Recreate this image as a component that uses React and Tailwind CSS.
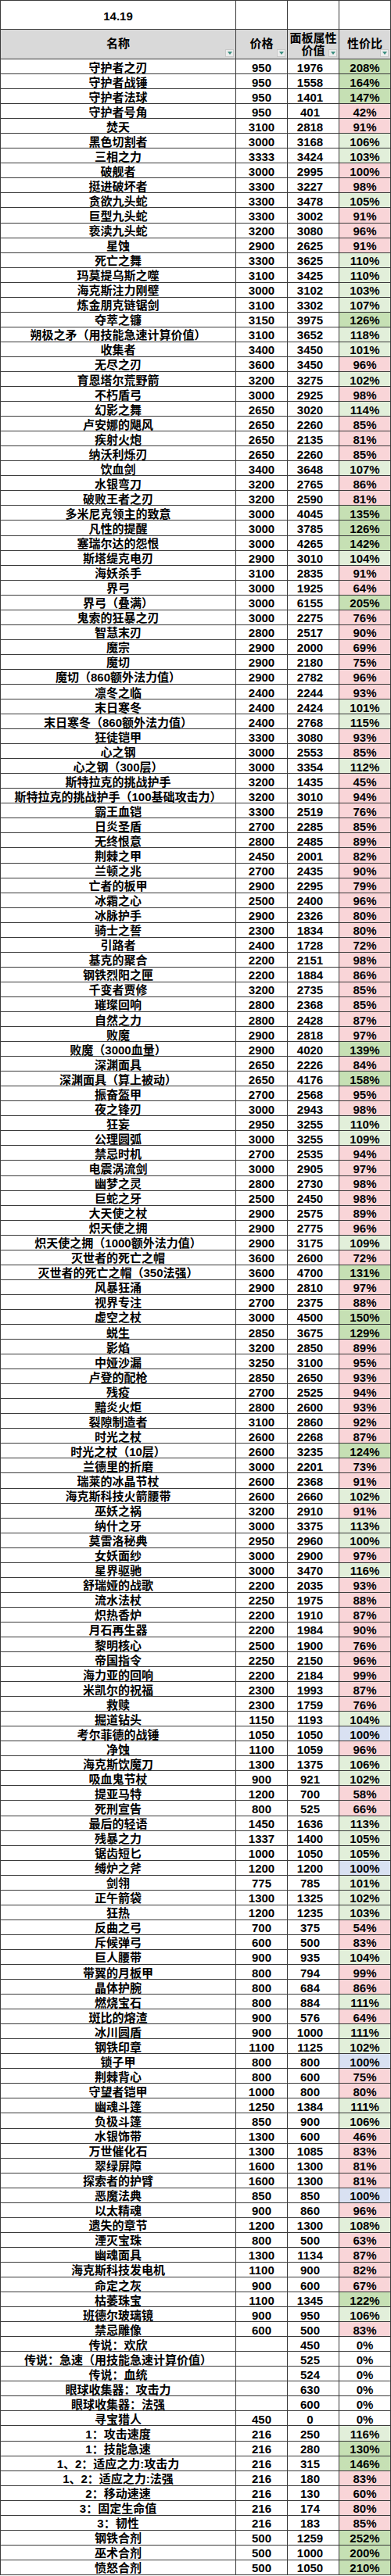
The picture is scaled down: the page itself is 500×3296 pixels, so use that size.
import React from "react";

// 名称|价格|面板属性价值|性价比
const RAW = `守护者之刃|950|1976|208%
守护者战锤|950|1558|164%
守护者法球|950|1401|147%
守护者号角|950|401|42%
焚天|3100|2818|91%
黑色切割者|3000|3168|106%
三相之力|3333|3424|103%
破舰者|3000|2995|100%
挺进破坏者|3300|3227|98%
贪欲九头蛇|3300|3478|105%
巨型九头蛇|3300|3002|91%
亵渎九头蛇|3200|3080|96%
星蚀|2900|2625|91%
死亡之舞|3300|3625|110%
玛莫提乌斯之噬|3100|3425|110%
海克斯注力刚壁|3000|3102|103%
炼金朋克链锯剑|3100|3302|107%
夺萃之镰|3150|3975|126%
朔极之矛（用技能急速计算价值）|3100|3652|118%
收集者|3400|3450|101%
无尽之刃|3600|3450|96%
育恩塔尔荒野箭|3200|3275|102%
不朽盾弓|3000|2925|98%
幻影之舞|2650|3020|114%
卢安娜的飓风|2650|2260|85%
疾射火炮|2650|2135|81%
纳沃利烁刃|2650|2260|85%
饮血剑|3400|3648|107%
水银弯刀|3200|2765|86%
破败王者之刃|3200|2590|81%
多米尼克领主的致意|3000|4045|135%
凡性的提醒|3000|3785|126%
塞瑞尔达的怨恨|3000|4265|142%
斯塔缇克电刃|2900|3010|104%
海妖杀手|3100|2835|91%
界弓|3000|1925|64%
界弓（叠满）|3000|6155|205%
鬼索的狂暴之刃|3000|2275|76%
智慧末刃|2800|2517|90%
魔宗|2900|2000|69%
魔切|2900|2180|75%
魔切（860额外法力值）|2900|2782|96%
凛冬之临|2400|2244|93%
末日寒冬|2400|2424|101%
末日寒冬（860额外法力值）|2400|2768|115%
狂徒铠甲|3300|3080|93%
心之钢|3000|2553|85%
心之钢（300层）|3000|3354|112%
斯特拉克的挑战护手|3200|1435|45%
斯特拉克的挑战护手（100基础攻击力）|3200|3010|94%
霸王血铠|3300|2519|76%
日炎圣盾|2700|2285|85%
无终恨意|2800|2485|89%
荆棘之甲|2450|2001|82%
兰顿之兆|2700|2435|90%
亡者的板甲|2900|2295|79%
冰霜之心|2500|2400|96%
冰脉护手|2900|2326|80%
骑士之誓|2300|1834|80%
引路者|2400|1728|72%
基克的聚合|2200|2151|98%
钢铁烈阳之匣|2200|1884|86%
千变者贾修|3200|2735|85%
璀璨回响|2800|2368|85%
自然之力|2800|2428|87%
败魔|2900|2818|97%
败魔（3000血量）|2900|4020|139%
深渊面具|2650|2226|84%
深渊面具（算上被动）|2650|4176|158%
振奋盔甲|2700|2568|95%
夜之锋刃|3000|2943|98%
狂妄|2950|3255|110%
公理圆弧|3000|3255|109%
禁忌时机|2700|2535|94%
电震涡流剑|3000|2905|97%
幽梦之灵|2800|2730|98%
巨蛇之牙|2500|2450|98%
大天使之杖|2900|2575|89%
炽天使之拥|2900|2775|96%
炽天使之拥（1000额外法力值）|2900|3175|109%
灭世者的死亡之帽|3600|2600|72%
灭世者的死亡之帽（350法强）|3600|4700|131%
风暴狂涌|2900|2810|97%
视界专注|2700|2375|88%
虚空之杖|3000|4500|150%
蜕生|2850|3675|129%
影焰|3200|2850|89%
中娅沙漏|3250|3100|95%
卢登的配枪|2850|2650|93%
残疫|2700|2525|94%
黯炎火炬|2800|2600|93%
裂隙制造者|3100|2860|92%
时光之杖|2600|2268|87%
时光之杖（10层）|2600|3235|124%
兰德里的折磨|3000|2201|73%
瑞莱的冰晶节杖|2600|2368|91%
海克斯科技火箭腰带|2600|2660|102%
巫妖之祸|3200|2910|91%
纳什之牙|3000|3375|113%
莫雷洛秘典|2950|2960|100%
女妖面纱|3000|2900|97%
星界驱驰|3000|3470|116%
舒瑞娅的战歌|2200|2035|93%
流水法杖|2250|1975|88%
炽热香炉|2200|1910|87%
月石再生器|2200|1984|90%
黎明核心|2500|1900|76%
帝国指令|2250|2150|96%
海力亚的回响|2200|2184|99%
米凯尔的祝福|2300|1993|87%
救赎|2300|1759|76%
掘道钻头|1150|1193|104%
考尔菲德的战锤|1050|1050|100%
净蚀|1100|1059|96%
海克斯饮魔刀|1300|1375|106%
吸血鬼节杖|900|921|102%
提亚马特|1200|700|58%
死刑宣告|800|525|66%
最后的轻语|1450|1636|113%
残暴之力|1337|1400|105%
锯齿短匕|1000|1050|105%
缚炉之斧|1200|1200|100%
剑翎|775|785|101%
正午箭袋|1300|1325|102%
狂热|1200|1235|103%
反曲之弓|700|375|54%
斥候弹弓|600|500|83%
巨人腰带|900|935|104%
带翼的月板甲|800|794|99%
晶体护腕|800|684|86%
燃烧宝石|800|884|111%
斑比的熔渣|900|576|64%
冰川圆盾|900|1000|111%
钢铁印章|1100|1125|102%
锁子甲|800|800|100%
荆棘背心|800|600|75%
守望者铠甲|1000|800|80%
幽魂斗篷|1250|1384|111%
负极斗篷|850|900|106%
水银饰带|1300|600|46%
万世催化石|1300|1085|83%
翠绿屏障|1600|1300|81%
探索者的护臂|1600|1300|81%
恶魔法典|850|850|100%
以太精魂|900|860|96%
遗失的章节|1200|1300|108%
湮灭宝珠|800|500|63%
幽魂面具|1300|1134|87%
海克斯科技发电机|1100|900|82%
命定之灰|900|600|67%
枯萎珠宝|1100|1345|122%
班德尔玻璃镜|900|950|106%
禁忌雕像|600|500|83%
传说：欢欣||450|0%
传说：急速（用技能急速计算价值）||525|0%
传说：血统||524|0%
眼球收集器：攻击力||630|0%
眼球收集器：法强||600|0%
寻宝猎人|450|0|0%
1：攻击速度|216|250|116%
1：技能急速|216|280|130%
1、2：适应之力:攻击力|216|315|146%
1、2：适应之力:法强|216|180|83%
2：移动速速|216|130|60%
3：固定生命值|216|174|80%
3：韧性|216|183|85%
钢铁合剂|500|1259|252%
巫术合剂|500|1000|200%
愤怒合剂|500|1050|210%`;

const rows = RAW.split("\n").map((line) => {
  const [name, price, value, pct] = line.split("|");
  return { name, price, value, pct };
});

// 条件格式：<100% 粉，=100% 蓝，100~120% 浅绿，>=120% 绿，无数据白
const fillFor = (r) => {
  const p = Number(r.price);
  const v = Number(r.value);
  if (!p || !v) return "bg-white";
  const k = v / p;
  if (k < 1) return "bg-[#f9d5d8]";
  if (k === 1) return "bg-[#d9e1f2]";
  if (k < 1.2) return "bg-[#e2efda]";
  return "bg-[#c6e0b4]";
};

// 表头右下角的筛选按钮
const FilterBtn = () => (
  <span className="absolute right-[2px] bottom-[2px] w-[11px] h-[10px] bg-[#ececec] border border-[#c8c8c8] flex items-center justify-center">
    <svg width="6" height="4" viewBox="0 0 6 4">
      <polygon points="0 0, 6 0, 3 4" fill="#3d8f80" />
    </svg>
  </span>
);

const cell = "border-r border-b border-[#3b3b3b] flex items-center justify-center whitespace-nowrap overflow-hidden";

export default function App() {
  return (
    <div className="w-[500px] bg-white text-black font-bold text-[15px] font-['Liberation_Sans','Noto_Sans_CJK_SC',sans-serif]">
      <div className="grid grid-cols-[301px_66px_66px_66px] border-l border-t border-[#3b3b3b]">
        {/* 版本号 */}
        <div className={`${cell} h-[37px] pt-[5px]`}>14.19</div>
        <div className={`${cell} h-[37px]`} />
        <div className={`${cell} h-[37px]`} />
        <div className={`${cell} h-[37px]`} />

        {/* 表头 */}
        <div className={`${cell} relative h-[38px] bg-[#d9d9d9]`}>
          名称
          <FilterBtn />
        </div>
        <div className={`${cell} relative h-[38px] bg-[#d9d9d9]`}>
          价格
          <FilterBtn />
        </div>
        <div className={`${cell} relative h-[38px] bg-[#d9d9d9] flex-col leading-[16px]`}>
          <span>面板属性</span>
          <span>价值</span>
          <FilterBtn />
        </div>
        <div className={`${cell} relative h-[38px] bg-[#d9d9d9]`}>
          性价比
          <FilterBtn />
        </div>

        {rows.map((r, i) => (
          <React.Fragment key={i}>
            <div className={`${cell} h-[19.05px] leading-[19px] pt-[2px]`}>{r.name}</div>
            <div className={`${cell} h-[19.05px] leading-[19px] pt-[2px]`}>{r.price}</div>
            <div className={`${cell} h-[19.05px] leading-[19px] pt-[2px] pr-[8px]`}>{r.value}</div>
            <div className={`${cell} h-[19.05px] leading-[19px] pt-[2px] ${fillFor(r)}`}>{r.pct}</div>
          </React.Fragment>
        ))}
      </div>
    </div>
  );
}
